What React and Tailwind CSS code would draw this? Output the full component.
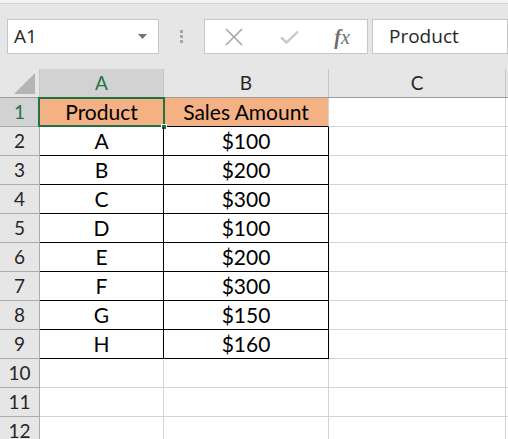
import React from "react";

const rows = [
  ["Product", "Sales Amount"],
  ["A", "$100"],
  ["B", "$200"],
  ["C", "$300"],
  ["D", "$100"],
  ["E", "$200"],
  ["F", "$300"],
  ["G", "$150"],
  ["H", "$160"],
  ["", ""],
  ["", ""],
  ["", ""],
];

const cellFont = { fontFamily: "Lato, 'Open Sans', sans-serif" };

const App = () => {
  return (
    <div className="w-[508px] h-[439px] overflow-hidden bg-white" style={cellFont}>
      {/* formula bar */}
      <div className="h-[4px] bg-[#f3f3f3] border-b border-[#d5d5d5]" />
      <div className="h-[65px] bg-[#e6e6e6] pt-[15px] flex items-start">
        <div className="ml-[7px] w-[152px] h-[35px] bg-white border border-[#c6c6c6] flex items-center justify-between pl-[6px] pr-[11px]">
          <span className="text-[19px] text-[#262626]" style={{ fontFamily: "'Open Sans', sans-serif" }}>A1</span>
          <svg width="9" height="5" viewBox="0 0 9 5"><path d="M0 0h9L4.5 5z" fill="#737373" /></svg>
        </div>
        <div className="w-[45px] h-[35px] flex flex-col items-center justify-center gap-[2px]">
          <div className="w-[3px] h-[3px] bg-[#a6a6a6]" />
          <div className="w-[3px] h-[3px] bg-[#a6a6a6]" />
          <div className="w-[3px] h-[3px] bg-[#a6a6a6]" />
        </div>
        <div className="w-[164px] h-[35px] bg-white border border-[#c6c6c6] flex items-center">
          <div className="w-[56px] flex justify-center pl-[2px]">
            <svg width="18" height="18" viewBox="0 0 18 18"><path d="M1 1L17 17M17 1L1 17" stroke="#a6a6a6" strokeWidth="1.6" /></svg>
          </div>
          <div className="w-[56px] flex justify-center">
            <svg width="19" height="14" viewBox="0 0 19 14"><path d="M1 7.5L6.5 12.5L18 1.5" stroke="#c8c8c8" strokeWidth="2.4" fill="none" /></svg>
          </div>
          <div className="w-[50px] flex justify-center">
            <span className="text-[20px] italic text-[#6e6e6e] leading-none" style={{ fontFamily: "'Liberation Serif', serif" }}>
              <span className="font-bold">f</span>x
            </span>
          </div>
        </div>
        <div className="ml-[4px] flex-1 h-[35px] bg-white border border-[#c6c6c6] flex items-center pl-[16px]">
          <span className="text-[19px] text-[#262626]" style={{ fontFamily: "'Open Sans', sans-serif" }}>Product</span>
        </div>
      </div>

      {/* column headers */}
      <div className="flex h-[29px] bg-[#e6e6e6] border-b border-[#9b9b9b]">
        <div className="w-[40px] h-full border-r border-[#c6c6c6] flex items-end justify-end pr-[4px] pb-[3px]">
          <svg width="21" height="21" viewBox="0 0 21 21"><path d="M21 0V21H0z" fill="#b4b4b4" /></svg>
        </div>
        <div className="w-[124px] h-full bg-[#d2d2d2] border-r border-[#c6c6c6] flex items-center justify-center text-[19px] text-[#217346]">A</div>
        <div className="w-[165px] h-full border-r border-[#c6c6c6] flex items-center justify-center text-[19px] text-[#262626]">B</div>
        <div className="w-[177px] h-full border-r border-[#c6c6c6] flex items-center justify-center text-[19px] text-[#262626]">C</div>
        <div className="flex-1" />
      </div>

      {/* body */}
      {rows.map((r, i) => {
        const n = i + 1;
        const inTable = n <= 9;
        const isHead = n === 1;
        return (
          <div key={n} className="flex h-[29px]">
            <div
              className={`w-[40px] h-full border-r border-b border-[#ababab] flex items-center justify-center text-[19px] ${
                isHead ? "bg-[#d2d2d2] text-[#217346]" : "bg-[#e6e6e6] text-[#262626]"
              }`}
            >
              {n}
            </div>
            <div
              className={`relative w-[124px] h-full border-r border-b flex items-center justify-center text-[21px] text-black ${
                inTable ? "border-black" : "border-[#d4d4d4]"
              } ${isHead ? "bg-[#f4b183]" : ""}`}
            >
              {r[0]}
              {isHead && (
                <>
                  <div className="absolute left-[-2px] top-[-1px] right-[-2px] bottom-[-1px] border-2 border-[#217346]" />
                  <div className="absolute right-[-4px] bottom-[-4px] w-[6px] h-[6px] bg-[#217346] border border-white" />
                </>
              )}
            </div>
            <div
              className={`w-[165px] h-full border-r border-b flex items-center justify-center text-[21px] text-black ${
                inTable ? "border-b-black" : "border-b-[#d4d4d4]"
              } ${inTable && !isHead ? "border-r-black" : "border-r-[#d4d4d4]"} ${isHead ? "bg-[#f4b183]" : ""}`}
            >
              {r[1]}
            </div>
            <div className="w-[177px] h-full border-r border-b border-[#d4d4d4]" />
            <div className="flex-1 h-full border-b border-[#d4d4d4]" />
          </div>
        );
      })}
    </div>
  );
};

export default App;
